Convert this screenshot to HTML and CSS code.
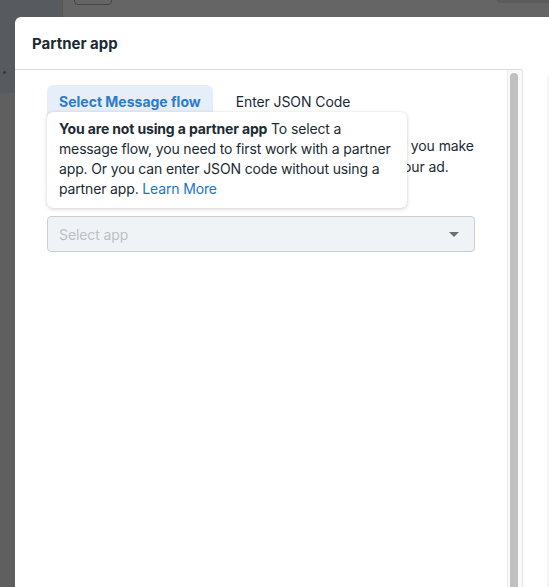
FILE: index.html
```html
<!DOCTYPE html>
<html>
<head>
<meta charset="utf-8">
<link rel="stylesheet" href="styles.css">
</head>
<body>
<div class="page">
  <div class="sidebar">
    <div class="sidebar-top"><span class="dot"></span></div>
  </div>
  <div class="main">
    <div class="topbar">
      <div class="topbar-left"></div>
      <div class="topbar-btn"></div>
      <div class="topbar-right"></div>
    </div>
  </div>
</div>

<div class="modal">
  <div class="modal-header">Partner app</div>
  <div class="modal-body">
    <div class="panel">
      <div class="content">
        <div class="tabs">
          <div class="tab active">Select Message flow</div>
          <div class="tab">Enter JSON Code</div>
        </div>
        <p class="desc">Select a message flow from your partner app for ads. If you make<br>changes to the message flow, they will be updated in your ad.</p>
        <div class="label">Partner app</div>
        <div class="select">
          <span class="placeholder">Select app</span>
          <span class="caret"></span>
        </div>
        <div class="tooltip">
          <b>You are not using a partner app</b> To select a message flow, you need to first work with a partner app. Or you can enter JSON code without using a partner app. <span class="link">Learn More</span>
        </div>
      </div>
      <div class="scrollbar"><div class="thumb"></div></div>
    </div>
    <div class="side"></div>
  </div>
</div>
</body>
</html>
```

FILE: styles.css
```css
html, body {
  margin: 0;
  padding: 0;
  width: 549px;
  height: 587px;
  overflow: hidden;
  background: #626262;
  font-family: Inter, "Liberation Sans", sans-serif;
}

.page {
  display: flex;
  height: 587px;
}

.sidebar {
  width: 62px;
  background: #5f5f5f;
  border-right: 1px solid #575757;
}

.sidebar-top {
  height: 93px;
  background: #575b5f;
  position: relative;
}

.dot {
  position: absolute;
  left: 3px;
  top: 71px;
  width: 3px;
  height: 3px;
  border-radius: 50%;
  background: #3a3a3a;
}

.main {
  flex: 1;
  background: #656565;
}

.topbar {
  display: flex;
  height: 17px;
}

.topbar-left {
  width: 11px;
}

.topbar-btn {
  width: 36px;
  height: 5px;
  margin-top: -2px;
  border: 1px solid #454545;
  border-radius: 0 0 4px 4px;
}

.topbar-right {
  margin-left: auto;
  width: 52px;
  height: 3px;
  background: #5a5d60;
  border-radius: 0 0 0 3px;
}

.modal {
  position: absolute;
  left: 15px;
  top: 17px;
  width: 560px;
  height: 600px;
  background: #fff;
  border-radius: 6px 0 0 0;
  color: #1c2b33;
}

.modal-header {
  height: 52px;
  display: flex;
  align-items: center;
  padding-left: 17px;
  font-size: 15px;
  font-weight: 700;
  color: #1c2b33;
  border-bottom: 1px solid #dcdcdc;
  width: 490px;
}

.modal-body {
  display: flex;
  height: 540px;
}

.panel {
  display: flex;
  width: 507px;
  border-right: 1px solid #e2e2e2;
}

.content {
  position: relative;
  width: 428px;
  padding: 15px 32px;
  font-size: 14px;
  line-height: 21px;
  letter-spacing: -0.1px;
}

.tabs {
  display: flex;
  gap: 11px;
  height: 32px;
}

.tab {
  padding: 0 12px;
  display: flex;
  align-items: center;
  color: #1c2b33;
  border-radius: 6px 6px 0 0;
}

.tab.active {
  background: #e6eff9;
  color: #2e7bc7;
  font-weight: 700;
  letter-spacing: 0;
}

.desc {
  margin: 18px 0 0;
  white-space: nowrap;
  overflow: hidden;
  color: #1c2b33;
}

.label {
  margin-top: 12px;
  font-weight: 700;
  line-height: 20px;
}

.select {
  margin-top: 7px;
  height: 34px;
  border: 1px solid #c9ced4;
  border-radius: 4px;
  background: #f0f3f6;
  display: flex;
  align-items: center;
  padding: 0 15px 0 11px;
}

.placeholder {
  color: #bcc0c5;
  flex: 1;
}

.caret {
  width: 0;
  height: 0;
  border-left: 5px solid transparent;
  border-right: 5px solid transparent;
  border-top: 5px solid #6a6f74;
}

.tooltip {
  position: absolute;
  left: 32px;
  top: 42px;
  width: 342px;
  padding: 7px 6px 9px 12px;
  background: #fff;
  border-radius: 6px;
  box-shadow: 0 1px 4px rgba(0, 0, 0, 0.18), 0 0 1px rgba(0, 0, 0, 0.1);
  font-size: 14px;
  line-height: 20px;
  letter-spacing: -0.15px;
  color: #1c2b33;
}

.tooltip b {
  font-weight: 700;
}

.link {
  color: #1d73c9;
}

.scrollbar {
  width: 15px;
  border-left: 1px solid #ebebeb;
  background: #fafafa;
  padding: 3px 3px 0 2px;
  box-sizing: border-box;
}

.thumb {
  width: 8px;
  height: 600px;
  background: #c1c1c1;
  border-radius: 4px;
}

.side {
  margin-left: 24px;
  margin-top: 3px;
  width: 20px;
  background: #f4f4f8;
  border-radius: 6px 0 0 0;
}
```
